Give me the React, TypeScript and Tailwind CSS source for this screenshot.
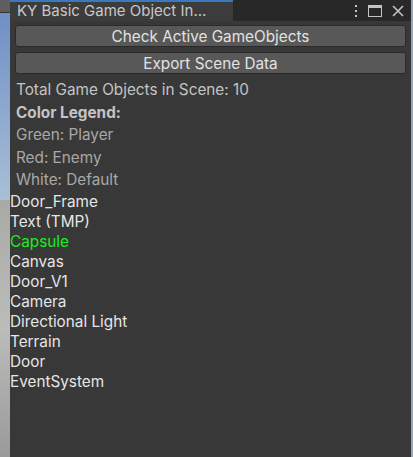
const objects = [
  { name: "Door_Frame", tag: "Default" },
  { name: "Text (TMP)", tag: "Default" },
  { name: "Capsule", tag: "Player" },
  { name: "Canvas", tag: "Default" },
  { name: "Door_V1", tag: "Default" },
  { name: "Camera", tag: "Default" },
  { name: "Directional Light", tag: "Default" },
  { name: "Terrain", tag: "Default" },
  { name: "Door", tag: "Default" },
  { name: "EventSystem", tag: "Default" },
];

function colorFor(tag: string) {
  if (tag === "Player") return "text-[#1aef1a]";
  if (tag === "Enemy") return "text-[#ff3030]";
  return "text-[#e6e6e6]";
}

function EditorButton({ label }: { label: string }) {
  return (
    <button className="h-[22px] w-full rounded-[3px] border border-[#2a2a2a] bg-[#585858] text-center text-[15.3px] leading-[21px] text-[#e2e2e2]">
      {label}
    </button>
  );
}

export default function App() {
  return (
    <div
      className="flex h-[457px] w-[413px] overflow-hidden bg-[#3a3a3a]"
      style={{ fontFamily: "Inter, 'Noto Sans', sans-serif" }}
    >
      {/* scene view peeking out on the left */}
      <div className="flex w-[10px] flex-col">
        <div className="h-[13px] border-b border-[#333] bg-[#5e5e5e]" />
        <div className="h-[187px] bg-gradient-to-b from-[#6f90c6] to-[#a9bfd6]" />
        <div className="flex-1 bg-gradient-to-b from-[#a9aaa6] via-[#bcbcba] to-[#9a9a98]" />
      </div>

      <div className="flex w-[401px] flex-col">
        {/* tab header */}
        <div className="flex h-[21px] bg-[#282828]">
          <div className="w-[223px] border-t-2 border-[#3a79bb] bg-[#3c3c3c] pl-[7px] text-[15px] leading-[18px] text-[#c8c8c8]">
            KY Basic Game Object In...
          </div>
          <div className="flex flex-1 items-center justify-end gap-[10px] pr-[7px] text-[#c4c4c4]">
            <svg width="4" height="14" viewBox="0 0 4 14" fill="currentColor">
              <rect x="1" y="1" width="2" height="2" />
              <rect x="1" y="6" width="2" height="2" />
              <rect x="1" y="11" width="2" height="2" />
            </svg>
            <svg width="14" height="12" viewBox="0 0 14 12" fill="none" stroke="currentColor">
              <rect x="0.5" y="0.5" width="13" height="11" />
              <rect x="0.5" y="0.5" width="13" height="2" fill="currentColor" />
            </svg>
            <svg width="12" height="12" viewBox="0 0 12 12" stroke="currentColor" strokeWidth="1.6">
              <path d="M1 1 L11 11 M11 1 L1 11" />
            </svg>
          </div>
        </div>

        {/* window body */}
        <div className="flex flex-1 flex-col bg-[#383838]">
          <div className="flex flex-col gap-[5px] px-[5px] pt-[4px]">
            <EditorButton label="Check Active GameObjects" />
            <EditorButton label="Export Scene Data" />
          </div>

          <div className="mt-[5px] flex flex-col pl-[6px] text-[15.3px] leading-[22.5px] text-[#c4c4c4]">
            <p>Total Game Objects in Scene: {objects.length}</p>
            <p className="font-bold">Color Legend:</p>
            <p className="text-[#a8a8a8]">Green: Player</p>
            <p className="text-[#a8a8a8]">Red: Enemy</p>
            <p className="text-[#a8a8a8]">White: Default</p>
          </div>

          <ul className="flex flex-col text-[15.3px] leading-[20px]">
            {objects.map((obj) => (
              <li key={obj.name} className={colorFor(obj.tag)}>
                {obj.name}
              </li>
            ))}
          </ul>
        </div>
      </div>

      <div className="w-[2px] bg-[#9aa6b4]" />
    </div>
  );
}
